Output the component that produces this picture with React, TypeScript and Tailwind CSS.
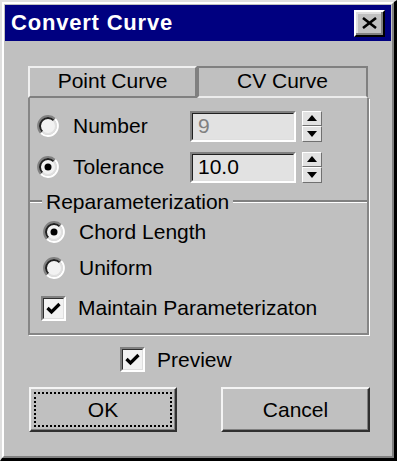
import React from "react";

const Radio = ({ checked = false }: { checked?: boolean }) => (
    <svg width="22" height="22" viewBox="0 0 22 22" className="shrink-0">
        <circle cx="11" cy="11" r="7.5" fill="#f2f2f2" />
        <path d="M3.93 18.07 A10 10 0 0 1 18.07 3.93" fill="none" stroke="#808080" strokeWidth="2" />
        <path d="M18.07 3.93 A10 10 0 0 1 3.93 18.07" fill="none" stroke="#ffffff" strokeWidth="2" />
        <path d="M5.34 16.66 A8 8 0 0 1 16.66 5.34" fill="none" stroke="#202020" strokeWidth="2" />
        <path d="M16.66 5.34 A8 8 0 0 1 5.34 16.66" fill="none" stroke="#dfdfdf" strokeWidth="2" />
        {checked && <circle cx="11" cy="11" r="3.5" fill="#000" />}
    </svg>
);

const CheckBox = () => (
    <div className="w-[25px] h-[25px] shrink-0 border-2 border-t-[#808080] border-l-[#808080] border-r-white border-b-white">
        <div className="w-full h-full border border-t-[#303030] border-l-[#303030] border-r-[#dfdfdf] border-b-[#dfdfdf] bg-[#f2f2f2] flex items-center justify-center">
            <svg width="15" height="13" viewBox="0 0 15 13">
                <path d="M1.5 6 L5.5 10 L13.5 2" fill="none" stroke="#000" strokeWidth="3.2" />
            </svg>
        </div>
    </div>
);

const Spinner = ({ value, disabled }: { value: string; disabled?: boolean }) => (
    <div className="flex items-center gap-[6px]">
        <div className="w-[106px] h-[31px] border-2 border-t-[#808080] border-l-[#808080] border-r-white border-b-white">
            <div className="w-full h-full border border-t-[#202020] border-l-[#202020] border-r-[#dfdfdf] border-b-[#dfdfdf] bg-[#e2e2e2] flex items-center pl-[5px]">
                <span className={disabled ? "text-[#808080]" : "text-black"}>{value}</span>
            </div>
        </div>
        <div className="flex flex-col w-[20px] h-[31px]">
            {[0, 1].map((i) => (
                <div
                    key={i}
                    className="flex-1 flex items-center justify-center bg-[#e2e2e2] border border-t-white border-l-white border-r-[#707070] border-b-[#707070]"
                >
                    <svg width="10" height="6" viewBox="0 0 10 6">
                        <path d={i === 0 ? "M0 6 L5 0 L10 6 Z" : "M0 0 L5 6 L10 0 Z"} fill="#000" />
                    </svg>
                </div>
            ))}
        </div>
    </div>
);

const Etched = ({ className = "" }: { className?: string }) => (
    <div className={`h-[3px] border-t-2 border-t-[#808080] border-b border-b-white ${className}`} />
);

export default function App() {
    return (
        <div className="w-[397px] h-[461px] bg-[#c0c0c0] font-['Liberation_Sans',Arial,sans-serif] text-[21px] text-black border-t-2 border-l-2 border-t-[#dfdfdf] border-l-[#dfdfdf] border-r-[3px] border-b-[3px] border-r-black border-b-black">
            <div className="w-full h-full border-2 border-t-white border-l-white border-r-[#808080] border-b-[#808080] p-[1px] flex flex-col">
                {/* Title bar */}
                <div className="h-[36px] bg-[#000080] flex items-center justify-between pl-[6px] pr-[6px]">
                    <span className="text-white font-bold text-[22px] tracking-[0.8px] leading-none">Convert Curve</span>
                    <div className="w-[31px] h-[27px] border-2 border-t-white border-l-white border-r-black border-b-black shadow-[inset_-2px_-2px_0_#808080,inset_2px_2px_0_#dfdfdf] bg-[#c0c0c0] flex items-center justify-center">
                        <svg width="17" height="12" viewBox="0 0 17 12">
                            <path d="M2 1 L15 11 M15 1 L2 11" stroke="#000" strokeWidth="2.6" />
                        </svg>
                    </div>
                </div>

                {/* Tabs */}
                <div className="mt-[25px] ml-[23px] flex">
                    <div className="w-[169px] h-[32px] border-2 border-t-[#f0f0f0] border-l-[#f0f0f0] border-r-[#808080] border-b-[#808080] flex items-center justify-center pb-[3px]">
                        Point Curve
                    </div>
                    <div className="w-[171px] h-[32px] border-2 border-t-[#808080] border-l-[#808080] border-r-[#808080] border-b-[#ececec] flex items-center justify-center pb-[3px]">
                        CV Curve
                    </div>
                </div>

                {/* Panel */}
                <div className="ml-[23px] w-[341px] border-2 border-t-0 border-[#868686] shadow-[1px_1px_0_#ffffff] pt-[12px] pb-[13px]">
                    <div className="h-[32px] flex items-center pl-[7px]">
                        <Radio />
                        <span className="ml-[14px] w-[117px]">Number</span>
                        <Spinner value="9" disabled />
                    </div>
                    <div className="mt-[9px] h-[32px] flex items-center pl-[7px]">
                        <Radio checked />
                        <span className="ml-[14px] w-[117px]">Tolerance</span>
                        <Spinner value="10.0" />
                    </div>

                    <div className="mt-[8px] h-[20px] flex items-center">
                        <Etched className="w-[12px]" />
                        <span className="px-[4px] leading-none">Reparameterization</span>
                        <Etched className="flex-1" />
                    </div>

                    <div className="mt-[9px] h-[24px] flex items-center pl-[13px]">
                        <Radio checked />
                        <span className="ml-[14px]">Chord Length</span>
                    </div>
                    <div className="mt-[12px] h-[24px] flex items-center pl-[13px]">
                        <Radio />
                        <span className="ml-[14px]">Uniform</span>
                    </div>
                    <div className="mt-[16px] h-[24px] flex items-center pl-[11px]">
                        <CheckBox />
                        <span className="ml-[12px]">Maintain Parameterizaton</span>
                    </div>
                </div>

                {/* Preview */}
                <div className="mt-[12px] h-[25px] flex items-center pl-[115px]">
                    <CheckBox />
                    <span className="ml-[12px]">Preview</span>
                </div>

                {/* Buttons */}
                <div className="mt-[15px] flex pl-[24px] gap-[44px]">
                    <button className="w-[148px] h-[45px] border-2 border-t-[#f4f4f4] border-l-[#f4f4f4] border-r-[#303030] border-b-[#303030] shadow-[inset_-1px_-1px_0_#808080] p-[3px]">
                        <div className="w-full h-full border-2 border-dotted border-black flex items-center justify-center">
                            OK
                        </div>
                    </button>
                    <button className="w-[149px] h-[45px] border-2 border-t-[#f4f4f4] border-l-[#f4f4f4] border-r-[#303030] border-b-[#303030] shadow-[inset_-1px_-1px_0_#808080] flex items-center justify-center">
                        Cancel
                    </button>
                </div>
            </div>
        </div>
    );
}
